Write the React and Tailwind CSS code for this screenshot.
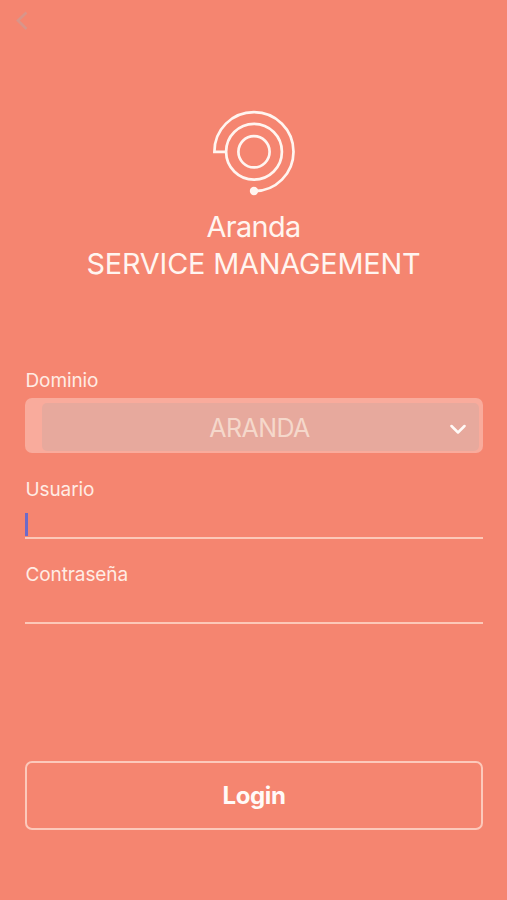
import React from 'react';

function BackIcon() {
  return (
    <svg width="60" height="48" viewBox="0 0 60 48" fill="none" className="block">
      <path d="M26.5 12.5L18 20.5L26.5 29" stroke="#d8958a" strokeWidth="2.6" />
    </svg>
  );
}

function Logo() {
  return (
    <svg width="90" height="90" viewBox="209 107 90 90" fill="none" stroke="#fff5f0" strokeWidth="2.7" className="block">
      <circle cx="254" cy="151.8" r="15.6" />
      <circle cx="254" cy="151.8" r="27.9" />
      <path d="M226.1 151.8H214.4C214.4 129.5 232 112.2 254 112.2A39.5 39.5 0 0 1 254 191.2" />
      <circle cx="254" cy="191" r="4.2" fill="#fff5f0" stroke="none" />
    </svg>
  );
}

function Field({ label, focused, className }) {
  return (
    <div className={className}>
      <div className="h-[26px] pt-px pl-[0.5px] text-[19px] leading-[26px] tracking-[-0.1px] text-[#ffece4]">
        {label}
      </div>
      <div className="flex h-[37px] items-end border-b-2 border-[#fcc8b8] pb-px">
        {focused && <div className="h-[23px] w-[3px] bg-[#6e6ac8]" />}
      </div>
    </div>
  );
}

export default function App() {
  return (
    <main className="flex h-[900px] w-[507px] flex-col overflow-hidden bg-[#f58570] font-['Inter',sans-serif]">
      <header className="h-[48px]">
        <BackIcon />
      </header>
      <section className="flex flex-col items-center pt-[59px] text-[28.8px] leading-[37px] text-[#fff5f0]">
        <div className="pl-[1px]">
          <Logo />
        </div>
        <h1 className="mt-[11px] text-center font-normal">
          <span className="block tracking-[-0.6px]">Aranda</span>
          <span className="block whitespace-nowrap tracking-[-0.15px]">SERVICE MANAGEMENT</span>
        </h1>
      </section>
      <form className="mt-[85px] pr-[24px] pl-[25px]">
        <div className="h-[31px] pt-px pl-[0.5px] text-[19px] leading-[26px] tracking-[-0.1px] text-[#ffece4]">Dominio</div>
        <div className="flex h-[55px] rounded-[7px] bg-[#f9ab9c] pt-[5px] pr-[4px] pb-[2px] pl-[17px]">
          <div className="flex flex-1 items-center rounded-[5px] bg-[#e7a99d] pr-[13px]">
            <span className="flex-1 pt-[3px] pl-[27px] text-center text-[25px] tracking-[-0.6px] text-[#f5d8cb]">ARANDA</span>
            <svg width="16" height="16" viewBox="0 0 16 16" fill="none" className="mt-[4px]">
              <path d="M1.5 5L8 11.5L14.5 5" stroke="#fffaf7" strokeWidth="2.5" strokeLinecap="round" strokeLinejoin="round" />
            </svg>
          </div>
        </div>
        <Field label="Usuario" focused className="mt-[23px]" />
        <Field label="Contraseña" className="mt-[22px]" />
        <button type="button" className="mt-[137px] block h-[69px] w-full rounded-[7px] border-2 border-[#fcc9bb] pt-px text-[24px] font-bold tracking-[-0.4px] text-[#fffaf8]">
          Login
        </button>
      </form>
    </main>
  );
}
